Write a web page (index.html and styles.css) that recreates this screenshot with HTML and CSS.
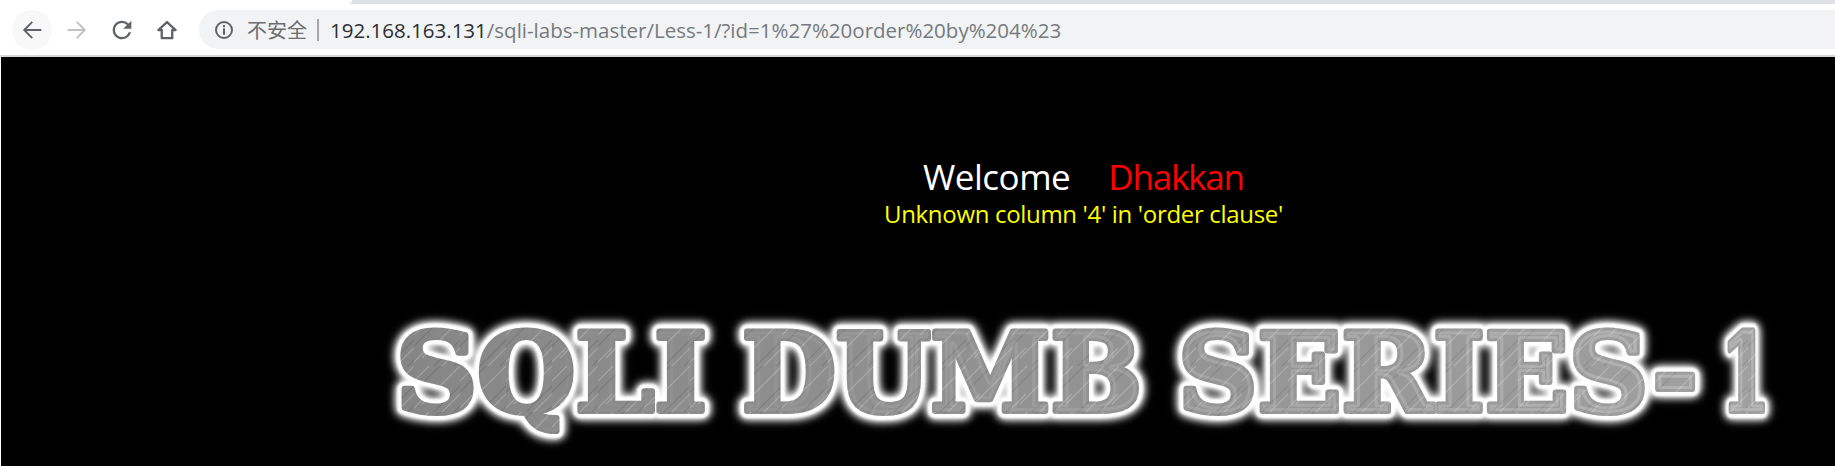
FILE: index.html
```html
<!DOCTYPE html>
<html>
<head>
    <meta charset="utf-8">
    <title>Less-1</title>
    <link rel="stylesheet" href="styles.css">
</head>
<body>
    <div class="tabstrip"><div class="tab"></div></div>
    <div class="toolbar">
        <span class="navbtn navbtn-back">
            <svg viewBox="0 0 24 24" class="icon"><path d="M20 11.2H7.4l5.4-5.6-1.1-1.1L4.2 12l7.5 7.5 1.1-1.1-5.4-5.6H20v-1.6z"/></svg>
        </span>
        <span class="navbtn navbtn-off">
            <svg viewBox="0 0 24 24" class="icon"><path d="M4 11.2h12.6l-5.4-5.6 1.1-1.1 7.5 7.5-7.5 7.5-1.1-1.1 5.4-5.6H4v-1.6z"/></svg>
        </span>
        <span class="navbtn">
            <svg viewBox="0 0 24 24" class="icon"><path d="M17.65 6.35A7.958 7.958 0 0 0 12 4c-4.42 0-7.99 3.58-7.99 8s3.57 8 7.99 8c3.73 0 6.84-2.55 7.73-6h-2.08A5.99 5.99 0 0 1 12 18c-3.31 0-6-2.69-6-6s2.69-6 6-6c1.66 0 3.14.69 4.22 1.78L13 11h7V4l-2.35 2.35z"/></svg>
        </span>
        <span class="navbtn">
            <svg viewBox="0 0 24 24" class="icon icon-line"><path d="M12 5.2 4.6 12h2.9v7h9v-7h2.9L12 5.2z"/></svg>
        </span>
        <div class="omnibox">
            <svg viewBox="0 0 20 20" class="info"><circle cx="10" cy="10" r="8"/><rect class="info-dot" x="9" y="5.2" width="2" height="2"/><rect class="info-dot" x="9" y="8.4" width="2" height="6.4"/></svg>
            <span class="secure">不安全</span>
            <span class="sep"></span>
            <span class="url"><span class="host">192.168.163.131</span>/sqli-labs-master/Less-1/?id=1%27%20order%20by%204%23</span>
        </div>
    </div>
    <div class="page">
        <div class="welcome"><span class="white">Welcome</span><span class="red">Dhakkan</span></div>
        <div class="error">Unknown column '4' in 'order clause'</div>
        <svg class="banner" width="1835" height="178" viewBox="0 0 1835 178">
            <defs>
                <pattern id="brushed" width="46" height="46" patternUnits="userSpaceOnUse">
                    <rect width="46" height="46" fill="#868686"/>
                    <path d="M-4 19 19 -4M8 38 50 -4M24 50 50 24M-4 46 14 28" stroke="#a2a2a2" stroke-width="1.2"/>
                    <path d="M-4 30 30 -4M16 50 50 16M36 50 50 36" stroke="#747474" stroke-width="1.2"/>
                </pattern>
                <linearGradient id="lighten" gradientUnits="userSpaceOnUse" x1="400" y1="0" x2="1770" y2="0">
                    <stop offset="0" stop-color="#fff" stop-opacity="0"/>
                    <stop offset="1" stop-color="#fff" stop-opacity="0.22"/>
                </linearGradient>
                <g id="title">
                    <text x="396" y="137" textLength="311" lengthAdjust="spacingAndGlyphs">SQLI</text>
                    <text x="742" y="137" textLength="400" lengthAdjust="spacingAndGlyphs">DUMB</text>
                    <text x="1178" y="137" textLength="520" lengthAdjust="spacingAndGlyphs">SERIES-</text>
                    <text x="1721" y="137" textLength="49" lengthAdjust="spacingAndGlyphs">1</text>
                </g>
            </defs>
            <use href="#title" class="title-glow"/>
            <use href="#title" class="title-face"/>
            <use href="#title" class="title-tint"/>
        </svg>
    </div>
</body>
</html>
```

FILE: styles.css
```css
html, body {
    margin: 0;
    padding: 0;
    height: 466px;
    overflow: hidden;
    background-color: #fff;
}
body {
    font-family: "Open Sans", "Noto Sans CJK SC", sans-serif;
}
.tabstrip {
    height: 4px;
    background-color: #dee1e6;
}
.tab {
    width: 352px;
    height: 4px;
    background-color: #fff;
    border-bottom-right-radius: 6px;
}
.toolbar {
    display: flex;
    align-items: center;
    height: 53px;
    padding-left: 12px;
    box-sizing: border-box;
    border-bottom: 2px solid #d4d6d9;
}
.navbtn {
    display: flex;
    align-items: center;
    justify-content: center;
    width: 40px;
    height: 40px;
    margin-right: 5px;
    border-radius: 50%;
}
.navbtn-back {
    background-color: #f8f8f8;
}
.icon {
    width: 28px;
    height: 28px;
    fill: #5f6368;
}
.navbtn-off .icon {
    fill: #c0c2c5;
}
.icon-line {
    fill: none;
    stroke: #5f6368;
    stroke-width: 2;
    stroke-linejoin: round;
}
.omnibox {
    flex: 1;
    display: flex;
    align-items: center;
    height: 39px;
    margin-left: 7px;
    padding-left: 15px;
    background-color: #f1f3f4;
    border-radius: 20px 0 0 20px;
    font-size: 20px;
    color: #6a6d70;
    white-space: nowrap;
}
.info {
    width: 20px;
    height: 20px;
    margin-right: 13px;
    fill: none;
    stroke: #5f6368;
    stroke-width: 2;
}
.info-dot {
    fill: #5f6368;
    stroke: none;
}
.secure {
    font-size: 20px;
    font-family: "Noto Sans CJK SC", sans-serif;
}
.sep {
    width: 2px;
    height: 22px;
    margin: 0 11px 0 10px;
    background-color: #a4a6a9;
}
.url {
    font-family: "Open Sans", sans-serif;
    font-size: 20.5px;
    color: #767a7e;
}
.host {
    color: #2c2f33;
}
.page {
    height: 409px;
    margin-left: 1px;
    background-color: #000;
    overflow: hidden;
}
.welcome {
    display: flex;
    gap: 38px;
    padding: 98px 0 0 922px;
    font-size: 35px;
    line-height: 44px;
    letter-spacing: -0.5px;
}
.white {
    color: #fff;
}
.red {
    color: #f00;
    letter-spacing: -1.2px;
}
.error {
    padding-left: 883px;
    font-size: 24px;
    line-height: 30px;
    letter-spacing: -0.32px;
    color: #ff0;
}
.banner {
    display: block;
    margin-top: 45px;
    margin-left: -1px;
}
#title {
    font-family: "DejaVu Serif", serif;
    font-weight: bold;
    font-size: 108px;
    stroke-linejoin: round;
}
.title-glow {
    fill: #fff;
    stroke: #fff;
    stroke-width: 14px;
    filter: blur(0.8px) drop-shadow(0 0 4px #fff) drop-shadow(0 0 3px #ddd);
}
.title-face {
    fill: url(#brushed);
    stroke: url(#brushed);
    stroke-width: 6px;
}
.title-tint {
    fill: url(#lighten);
    stroke: url(#lighten);
    stroke-width: 6px;
}
```
